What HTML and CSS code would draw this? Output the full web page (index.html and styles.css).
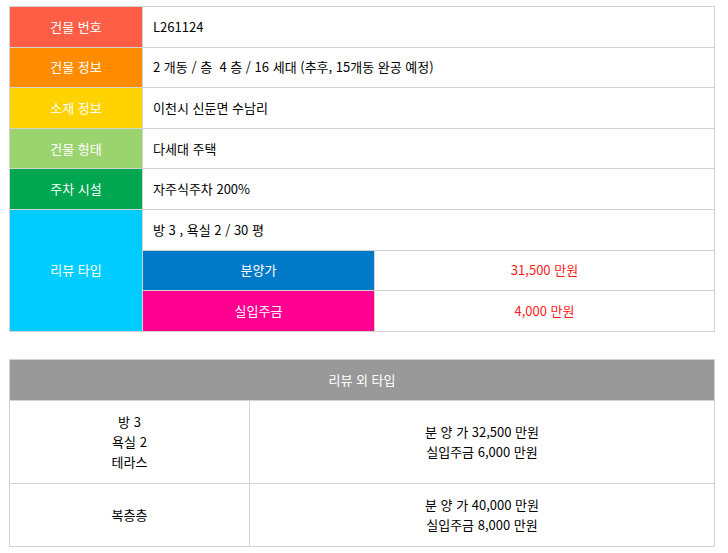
FILE: index.html
```html
<!DOCTYPE html>
<html lang="ko">

<head>
    <meta charset="utf-8">
    <title>건물 정보</title>
    <link rel="stylesheet" href="styles.css">
</head>

<body>
    <div class="wrap">
        <!-- 건물 기본 정보 -->
        <table class="info">
            <colgroup>
                <col class="c-label">
                <col class="c-mid">
                <col>
            </colgroup>
            <tr>
                <th class="red">건물 번호</th>
                <td colspan="2">L261124</td>
            </tr>
            <tr>
                <th class="orange">건물 정보</th>
                <td colspan="2">2 개동 / 층 &nbsp;4 층 / 16 세대 (추후, 15개동 완공 예정)</td>
            </tr>
            <tr>
                <th class="yellow">소재 정보</th>
                <td colspan="2">이천시 신둔면 수남리</td>
            </tr>
            <tr>
                <th class="lime">건물 형태</th>
                <td colspan="2">다세대 주택</td>
            </tr>
            <tr>
                <th class="green">주차 시설</th>
                <td colspan="2">자주식주차 200%</td>
            </tr>
            <tr>
                <th class="cyan" rowspan="3">리뷰 타입</th>
                <td colspan="2">방 3 , 욕실 2 / 30 평</td>
            </tr>
            <tr>
                <th class="blue">분양가</th>
                <td class="price">31,500 만원</td>
            </tr>
            <tr>
                <th class="pink">실입주금</th>
                <td class="price">4,000 만원</td>
            </tr>
        </table>

        <!-- 리뷰 외 타입 -->
        <table class="other">
            <colgroup>
                <col class="c-type">
                <col>
            </colgroup>
            <tr>
                <th colspan="2">리뷰 외 타입</th>
            </tr>
            <tr>
                <td>방 3<br>욕실 2<br>테라스</td>
                <td>분 양 가 32,500 만원<br>실입주금 6,000 만원</td>
            </tr>
            <tr>
                <td>복층층</td>
                <td>분 양 가 40,000 만원<br>실입주금 8,000 만원</td>
            </tr>
        </table>
    </div>
</body>

</html>
```

FILE: styles.css
```css
body {
    margin: 0;
    background: #fff;
    font-family: "Noto Sans CJK KR", "Noto Sans", sans-serif;
    font-size: 13px;
    color: #000;
}

.wrap {
    width: 706px;
    padding: 6px 0 0 9px;
}

table {
    width: 706px;
    border-collapse: collapse;
    table-layout: fixed;
}

th,
td {
    border: 1px solid #d3d3d3;
    line-height: 20px;
    padding: 0;
}

/* 건물 기본 정보 */
.info .c-label {
    width: 133px;
}

.info .c-mid {
    width: 232px;
}

.info tr {
    height: 40.6px;
}

.info th {
    color: #fff;
    font-weight: normal;
    text-align: center;
}

.info td {
    padding-left: 10px;
}

.info td.price {
    padding-left: 0;
    text-align: center;
    color: #ff1a1a;
}

.red { background: #ff5e46; }
.orange { background: #ff8c00; }
.yellow { background: #ffd200; }
.lime { background: #9bd46e; }
.green { background: #00a650; }
.cyan { background: #00ccff; }
.blue { background: #0079c9; }
.pink { background: #ff0090; }

/* 리뷰 외 타입 */
.other {
    margin-top: 27px;
}

.other .c-type {
    width: 240px;
}

.other th {
    height: 40px;
    background: #999;
    color: #fff;
    font-weight: normal;
}

.other td {
    text-align: center;
    padding: 11px 0;
    line-height: 20px;
}
```
